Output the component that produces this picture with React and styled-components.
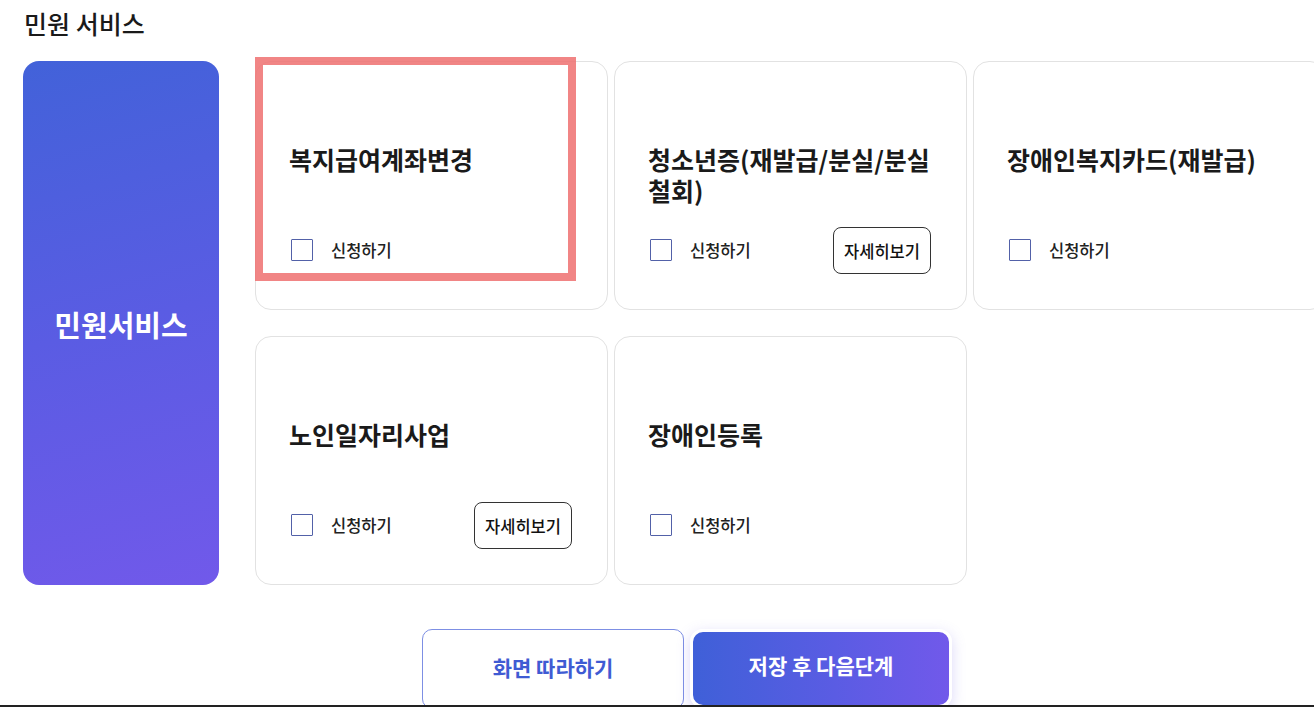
import React from "react";
import styled, { createGlobalStyle } from "styled-components";

const Global = createGlobalStyle`
  html, body { margin: 0; padding: 0; background: #fff; }
  body { font-family: "Noto Sans CJK KR", "Noto Sans", sans-serif; color: #111; overflow: hidden; }
  * { box-sizing: border-box; }
`;

const Page = styled.div`
  padding: 5px 0 0 23px;
  width: 1340px;
`;

const Heading = styled.h2`
  margin: 0 0 20px 1px;
  font-size: 25px;
  line-height: 36px;
  font-weight: 500;
  color: #1a1a1a;
`;

const Main = styled.div`
  display: flex;
  gap: 36px;
  align-items: stretch;
`;

const Side = styled.div`
  width: 196px;
  height: 524px;
  border-radius: 16px;
  background: linear-gradient(165deg, #4262d9 0%, #5a5ce3 50%, #7159ea 100%);
  display: flex;
  align-items: center;
  justify-content: center;
  color: #fff;
  font-size: 29px;
  font-weight: 700;
  padding-top: 2px;
`;

const Grid = styled.div`
  display: grid;
  grid-template-columns: repeat(3, 353px);
  grid-auto-rows: 249px;
  column-gap: 6px;
  row-gap: 26px;
`;

const Card = styled.div`
  position: relative;
  border: 1px solid #e2e2e2;
  border-radius: 16px;
  padding: 82px 35px 35px 33px;
  display: flex;
  flex-direction: column;
  background: #fff;
`;

const Highlight = styled.div`
  position: absolute;
  left: -1px;
  top: -5px;
  width: 321px;
  height: 224px;
  border: 8px solid rgba(238, 112, 112, 0.85);
  pointer-events: none;
`;

const Title = styled.div`
  font-size: 25px;
  line-height: 31px;
  font-weight: 700;
  color: #1a1a1a;
  white-space: pre-line;
`;

const Actions = styled.div`
  margin-top: auto;
  height: 47px;
  display: flex;
  align-items: center;
  justify-content: space-between;
`;

const Check = styled.label`
  display: flex;
  align-items: center;
  gap: 18px;
  font-size: 16.5px;
  font-weight: 500;
  color: #222;
  padding-left: 2px;
  margin-top: -1px;
`;

const Box = styled.span`
  width: 22px;
  height: 22px;
  border: 1.5px solid #5261a8;
  border-radius: 1px;
  background: #fff;
`;

const Detail = styled.button`
  width: 98px;
  height: 47px;
  border: 1px solid #333;
  border-radius: 8px;
  background: #fff;
  font-family: inherit;
  font-size: 16.5px;
  font-weight: 500;
  color: #111;
  padding: 0;
`;

const ButtonRow = styled.div`
  display: flex;
  gap: 6px;
  margin: 44px 0 0 399px;
`;

const OutlineButton = styled.button`
  width: 262px;
  height: 80px;
  border: 1px solid #7d8fe4;
  border-radius: 10px;
  background: #fff;
  font-family: inherit;
  font-size: 21px;
  font-weight: 700;
  color: #3f5bd3;
  padding: 0 0 5px;
`;

const PrimaryButton = styled.button`
  width: 262px;
  height: 79px;
  border: 3px solid #fff;
  border-radius: 13px;
  background: linear-gradient(90deg, #3f60d8 0%, #5a5ce3 55%, #7159ea 100%);
  box-shadow: 0 4px 14px rgba(110, 95, 230, 0.25);
  font-family: inherit;
  font-size: 21px;
  font-weight: 700;
  color: #fff;
  padding: 0 0 7px;
`;

const FooterLine = styled.div`
  position: fixed;
  left: 0;
  right: 0;
  bottom: 0;
  height: 2px;
  background: #222;
`;

const items = [
  { title: "복지급여계좌변경", highlight: true },
  { title: "청소년증(재발급/분실/분실\n철회)", detail: true },
  { title: "장애인복지카드(재발급)" },
  { title: "노인일자리사업", detail: true },
  { title: "장애인등록" },
];

export default function App() {
  return (
    <>
      <Global />
      <Page>
        <Heading>민원 서비스</Heading>
        <Main>
          <Side>민원서비스</Side>
          <Grid>
            {items.map((it) => (
              <Card key={it.title}>
                {it.highlight && <Highlight />}
                <Title>{it.title}</Title>
                <Actions>
                  <Check>
                    <Box />
                    신청하기
                  </Check>
                  {it.detail && <Detail>자세히보기</Detail>}
                </Actions>
              </Card>
            ))}
          </Grid>
        </Main>
        <ButtonRow>
          <OutlineButton>화면 따라하기</OutlineButton>
          <PrimaryButton>저장 후 다음단계</PrimaryButton>
        </ButtonRow>
      </Page>
      <FooterLine />
    </>
  );
}
